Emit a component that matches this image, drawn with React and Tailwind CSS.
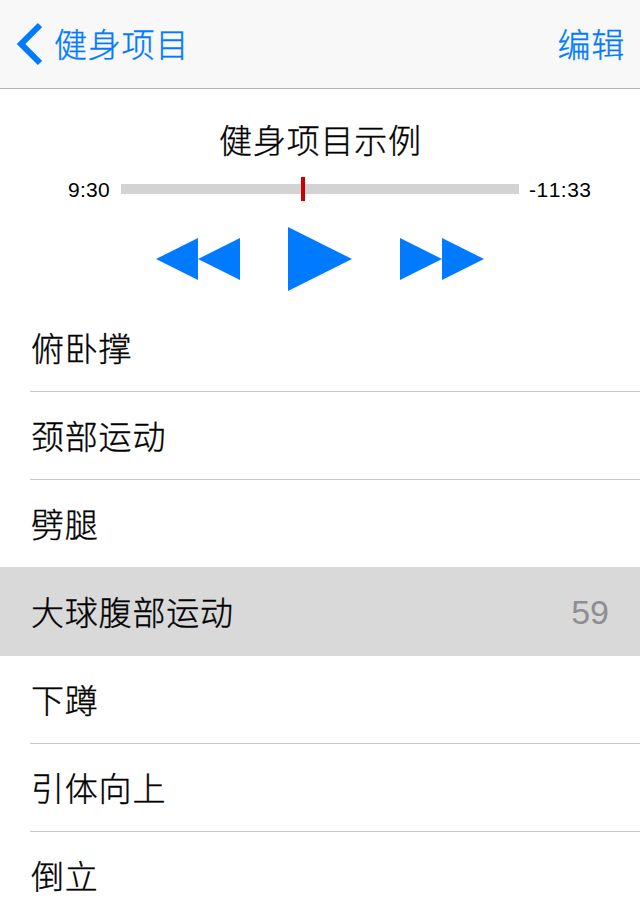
import React, { useState } from "react";

const exercises = [
  { id: 1, name: "俯卧撑" },
  { id: 2, name: "颈部运动" },
  { id: 3, name: "劈腿" },
  { id: 4, name: "大球腹部运动", remaining: 59 },
  { id: 5, name: "下蹲" },
  { id: 6, name: "引体向上" },
  { id: 7, name: "倒立" },
];

const Label = ({ children }) => (
  <span className="block pt-1 pl-px text-[33px] leading-[48px] tracking-[0.8px] font-light [-webkit-text-stroke:0.35px]">
    {children}
  </span>
);

const NavBar = () => (
  <header className="h-[89px] shrink-0 flex items-center justify-between pl-4 pr-[15px] bg-[#f8f8f8] border-b border-[#b2b2b2] text-[#007aff]">
    <button className="flex items-center gap-[11px]">
      <svg width="26" height="44" viewBox="0 0 26 44" fill="none">
        <path d="M24 3.1 5 22l19 18.9" stroke="currentColor" strokeWidth="6" />
      </svg>
      <Label>健身项目</Label>
    </button>
    <button>
      <Label>编辑</Label>
    </button>
  </header>
);

const Player = () => (
  <section className="h-[215px] shrink-0 flex flex-col items-center">
    <h1 className="mt-[25px]">
      <Label>健身项目示例</Label>
    </h1>
    <div className="w-full flex items-center h-6 mt-[11px] pl-[68px] text-[21px] leading-6">
      <span className="w-[53px] pt-[2px] tracking-[0.3px]">9:30</span>
      <div className="w-[398px] h-6 flex items-center relative">
        <div className="w-full h-[10px] bg-[#d3d3d3]" />
        <div className="absolute left-[180px] top-0 w-[4px] h-6 bg-[#cc0000]" />
      </div>
      <span className="ml-[10px] pt-[2px] tracking-[0.5px] [font-kerning:none]">-11:33</span>
    </div>
    <div className="flex items-center gap-12 mt-[26px] text-[#007aff]">
      <button>
        <svg width="84" height="42" viewBox="0 0 84 42" fill="currentColor">
          <path d="M42 0v42L0 21zM84 0v42L42 21z" />
        </svg>
      </button>
      <button>
        <svg width="64" height="64" viewBox="0 0 64 64" fill="currentColor">
          <path d="M0 0v64l64-32z" />
        </svg>
      </button>
      <button>
        <svg width="84" height="42" viewBox="0 0 84 42" fill="currentColor">
          <path d="M0 0v42l42-21zM42 0v42l42-21z" />
        </svg>
      </button>
    </div>
  </section>
);

export default function App() {
  const [activeId, setActiveId] = useState(4);

  return (
    <div className="w-[640px] h-[920px] flex flex-col overflow-hidden bg-white text-black font-['Liberation_Sans','Noto_Sans_CJK_SC',sans-serif]">
      <NavBar />
      <Player />
      <ul className="flex flex-col">
        {exercises.map((item, index) => {
          const isActive = item.id === activeId;
          const isLast = index === exercises.length - 1;
          const nextActive = !isLast && exercises[index + 1].id === activeId;
          return (
            <li
              key={item.id}
              onClick={() => setActiveId(item.id)}
              className={`shrink-0 pl-[30px] ${isActive ? "-mt-px h-[89px] pt-px bg-[#d9d9d9]" : "h-[88px]"}`}
            >
              <div
                className={`h-full flex items-center justify-between pr-[31px] border-b ${
                  isActive || nextActive || isLast ? "border-transparent" : "border-[#c8c8c8]"
                }`}
              >
                <Label>{item.name}</Label>
                {isActive && <span className="text-[34px] leading-[48px] text-[#8e8e93]">{item.remaining}</span>}
              </div>
            </li>
          );
        })}
      </ul>
    </div>
  );
}
